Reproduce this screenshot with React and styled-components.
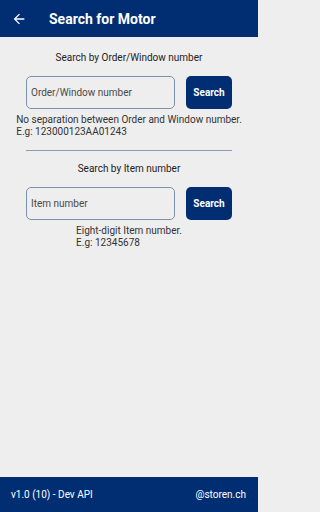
import React from "react";
import styled, { createGlobalStyle } from "styled-components";

const Global = createGlobalStyle`
  html, body { margin: 0; padding: 0; }
  body { font-family: Roboto, "Noto Sans", sans-serif; background: #eeeeee; }
  * { box-sizing: border-box; }
`;

const BLUE = "#012e72";

const Page = styled.div`
  display: flex;
  flex-direction: column;
  width: 258px;
  min-height: 100vh;
  background: #eeeeee;
`;

const Header = styled.header`
  height: 37px;
  background: ${BLUE};
  display: flex;
  align-items: center;
  padding-left: 11px;
  gap: 22px;
  color: #fff;
`;

const Title = styled.h1`
  margin: 0;
  font-size: 14px;
  font-weight: 700;
  letter-spacing: 0;
`;

const Main = styled.main`
  flex: 1;
  display: flex;
  flex-direction: column;
  align-items: center;
  padding-top: 15px;
`;

const Label = styled.div`
  font-size: 10px;
  color: #222;
  line-height: 12px;
  text-align: center;
`;

const Row = styled.div`
  display: flex;
  gap: 11px;
  margin-top: 12px;
`;

const Input = styled.input`
  width: 149px;
  height: 33px;
  border: 1px solid #7d8fae;
  border-radius: 5px;
  background: transparent;
  padding: 0 4px;
  font-family: Roboto, sans-serif;
  font-size: 10px;
  color: #333;
  outline: none;
  &::placeholder { color: #4a4a4a; }
`;

const Button = styled.button`
  width: 46px;
  height: 33px;
  border: none;
  border-radius: 5px;
  background: ${BLUE};
  color: #fff;
  font-family: Roboto, sans-serif;
  font-size: 10px;
  font-weight: 700;
  padding: 0;
`;

const Help = styled.div`
  font-size: 10px;
  line-height: 11.5px;
  color: #333;
  text-align: left;
  margin-top: 5px;
`;

const Divider = styled.hr`
  width: 206px;
  border: none;
  border-top: 1px solid #8b9cba;
  margin: 13px 0 12px;
`;

const Footer = styled.footer`
  height: 35px;
  background: ${BLUE};
  color: #fff;
  display: flex;
  align-items: center;
  justify-content: space-between;
  padding: 0 12px 0 11px;
  font-size: 10px;
`;

const Arrow = () => (
  <svg width="16" height="16" viewBox="0 0 24 24" fill="#fff">
    <path d="M20 11H7.83l5.59-5.59L12 4l-8 8 8 8 1.41-1.41L7.83 13H20v-2z" />
  </svg>
);

export default function App() {
  return (
    <>
      <Global />
      <Page>
        <Header>
          <Arrow />
          <Title>Search for Motor</Title>
        </Header>
        <Main>
          <Label>Search by Order/Window number</Label>
          <Row>
            <Input placeholder="Order/Window number" />
            <Button>Search</Button>
          </Row>
          <Help>
            No separation between Order and Window number.
            <br />
            E.g: 123000123AA01243
          </Help>
          <Divider />
          <Label>Search by Item number</Label>
          <Row>
            <Input placeholder="Item number" />
            <Button>Search</Button>
          </Row>
          <Help>
            Eight-digit Item number.
            <br />
            E.g: 12345678
          </Help>
        </Main>
        <Footer>
          <span>v1.0 (10) - Dev API</span>
          <span>@storen.ch</span>
        </Footer>
      </Page>
    </>
  );
}
